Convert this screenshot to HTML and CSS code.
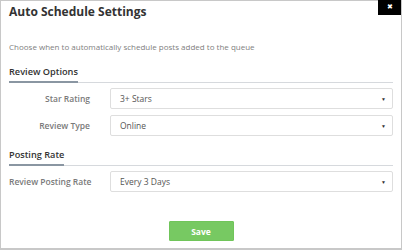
FILE: index.html
```html
<!DOCTYPE html>
<html lang="en">
<head>
    <meta charset="UTF-8">
    <title>Auto Schedule Settings</title>
    <link rel="stylesheet" href="styles.css">
</head>
<body>
    <div class="modal">
        <a href="#" class="close-btn">&#10006;</a>

        <h1>Auto Schedule Settings</h1>
        <p class="intro">Choose when to automatically schedule posts added to the queue</p>

        <div class="section-title"><span>Review Options</span></div>
        <div class="form-row">
            <label>Star Rating</label>
            <div class="select"><span>3+ Stars</span><span class="arrow">&#9660;</span></div>
        </div>
        <div class="form-row">
            <label>Review Type</label>
            <div class="select"><span>Online</span><span class="arrow">&#9660;</span></div>
        </div>

        <div class="section-title second"><span>Posting Rate</span></div>
        <div class="form-row">
            <label>Review Posting Rate</label>
            <div class="select"><span>Every 3 Days</span><span class="arrow">&#9660;</span></div>
        </div>

        <div class="actions">
            <button class="save-btn">Save</button>
        </div>
    </div>
</body>
</html>
```

FILE: styles.css
```css
* {
    margin: 0;
    padding: 0;
    box-sizing: border-box;
}

body {
    font-family: 'Open Sans', 'Noto Sans', sans-serif;
    color: #333;
    background: #fff;
}

.modal {
    position: relative;
    width: 402px;
    height: 250px;
    border: 1px solid #c8c8c8;
    border-bottom-width: 2px;
    padding: 3px 8px 0 8px;
}

.close-btn {
    position: absolute;
    top: -1px;
    right: 0;
    width: 23px;
    height: 15px;
    background: #000;
    color: #fff;
    font-size: 7px;
    line-height: 14px;
    text-align: center;
    text-decoration: none;
}

h1 {
    font-size: 12px;
    font-weight: 700;
    line-height: 16px;
    color: #333;
}

.intro {
    margin-top: 21px;
    font-size: 8px;
    line-height: 12px;
    color: #808080;
}

.section-title {
    display: flex;
    margin-top: 13px;
    border-bottom: 1px solid #d6d9dd;
}

.section-title span {
    font-size: 9.2px;
    line-height: 12px;
    font-weight: 600;
    color: #333;
    padding-bottom: 3px;
    border-bottom: 2px solid #8a96a2;
    margin-bottom: -1px;
}

.form-row {
    display: flex;
    align-items: center;
    margin-top: 6px;
}

.section-title + .form-row {
    margin-top: 5px;
}

.form-row label {
    width: 81px;
    text-align: right;
    white-space: nowrap;
    font-size: 8.5px;
    font-weight: 600;
    color: #7a7a7a;
    margin-right: 20px;
}

.select {
    flex: 1;
    height: 21px;
    border: 1px solid #dedede;
    border-radius: 2px;
    display: flex;
    align-items: center;
    justify-content: space-between;
    padding: 0 6px 0 9px;
    font-size: 8.5px;
    color: #555;
}

.select .arrow {
    font-size: 5px;
    color: #333;
}

.actions {
    display: flex;
    justify-content: center;
    margin-top: 29px;
}

.save-btn {
    width: 65px;
    height: 20px;
    background: #77c962;
    border: 1px solid #70c55a;
    border-radius: 1px;
    color: #fff;
    font-family: 'Open Sans', sans-serif;
    font-size: 8.5px;
    font-weight: 700;
}
```
